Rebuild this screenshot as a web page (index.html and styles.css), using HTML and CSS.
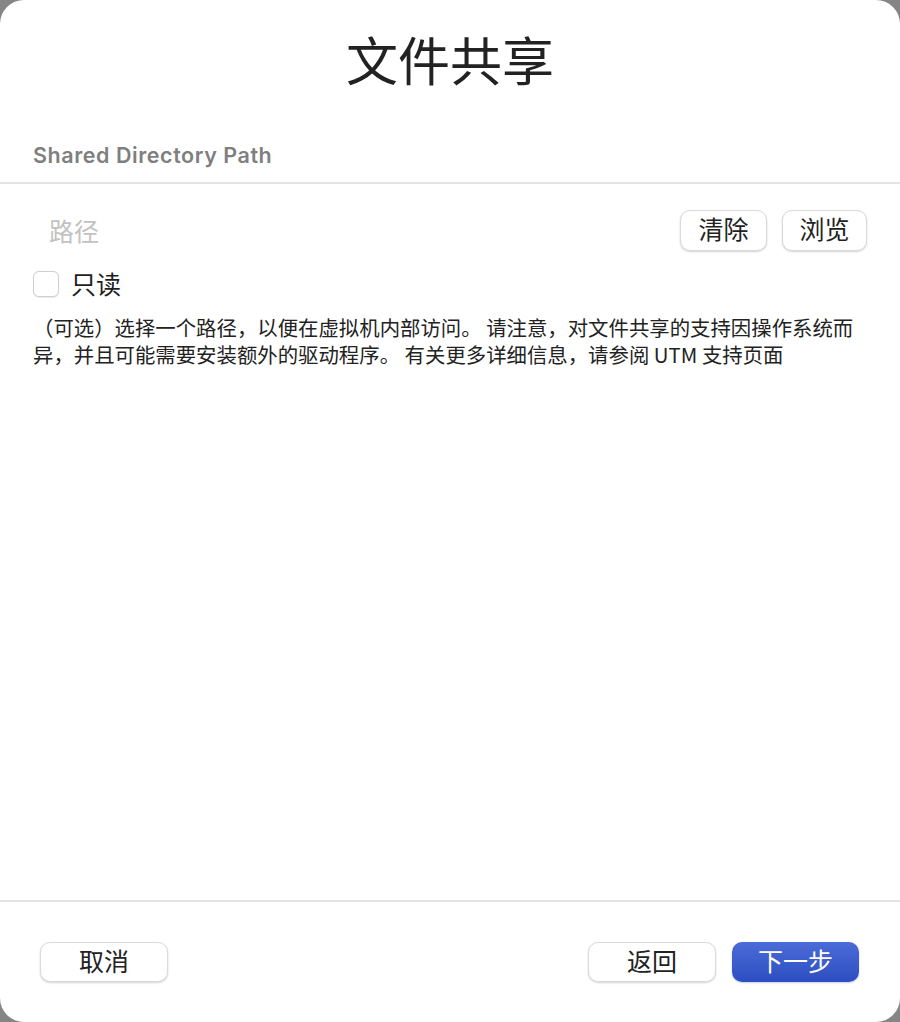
FILE: index.html
```html
<!DOCTYPE html>
<html lang="zh-CN">
<head>
<meta charset="utf-8">
<title>文件共享</title>
<link rel="stylesheet" href="styles.css">
</head>
<body>
<div class="window">
  <div class="content">
    <h1 class="title">文件共享</h1>
    <div class="section-label">Shared Directory Path</div>
    <div class="section">
      <div class="path-row">
        <div class="path-field">路径</div>
        <div class="path-buttons">
          <button class="btn small">清除</button>
          <button class="btn small">浏览</button>
        </div>
      </div>
      <label class="check-row">
        <span class="checkbox"></span>
        <span class="check-label">只读</span>
      </label>
      <p class="desc">（可选）选择一个路径，以便在虚拟机内部访问。 请注意，对文件共享的支持因操作系统而异，并且可能需要安装额外的驱动程序。 有关更多详细信息，请参阅 UTM 支持页面</p>
    </div>
  </div>
  <div class="footer">
    <button class="btn wide">取消</button>
    <div class="footer-right">
      <button class="btn wide">返回</button>
      <button class="btn wide primary">下一步</button>
    </div>
  </div>
</div>
</body>
</html>
```
FILE: styles.css
```css
* { box-sizing: border-box; }
html, body {
  margin: 0;
  padding: 0;
}
body {
  background: #858585;
  font-family: "Noto Sans CJK SC", "Noto Sans", sans-serif;
  color: #222;
}
.window {
  width: 900px;
  height: 1022px;
  background: #fff;
  border-radius: 24px;
  display: flex;
  flex-direction: column;
  overflow: hidden;
}
.content {
  flex: 1;
  display: flex;
  flex-direction: column;
}
.title {
  margin: 0;
  padding-top: 33px;
  font-size: 52px;
  line-height: 52px;
  font-weight: 400;
  text-align: center;
  color: #222;
}
.section-label {
  margin-top: 58px;
  padding: 0 33px 14px;
  font-family: Inter, "Noto Sans", sans-serif;
  font-weight: 600;
  font-size: 21.5px;
  letter-spacing: 0.55px;
  line-height: 25px;
  color: #7f7f7f;
  border-bottom: 2px solid #e4e4e4;
}
.section {
  padding: 26px 33px 0;
}
.path-row {
  display: flex;
  align-items: center;
  justify-content: space-between;
  height: 41px;
}
.path-field {
  padding-left: 16px;
  padding-bottom: 1px;
  font-size: 25px;
  color: #c2c2c2;
}
.path-buttons {
  display: flex;
  gap: 15px;
}
.btn {
  font-family: "Noto Sans CJK SC", sans-serif;
  font-size: 25px;
  line-height: 1;
  color: #222;
  background: #fff;
  border: 1px solid #dadada;
  border-radius: 10px;
  box-shadow: 0 1px 2px rgba(0,0,0,0.18);
  padding: 0 0 4px;
  display: flex;
  align-items: center;
  justify-content: center;
}
.btn.small {
  height: 41px;
  width: 87px;
}
.path-buttons .btn.small + .btn.small {
  width: 85px;
}
.check-row {
  display: flex;
  align-items: center;
  gap: 12px;
  margin-top: 20px;
  height: 26px;
}
.checkbox {
  width: 26px;
  height: 26px;
  border: 1px solid #cfcfcf;
  border-radius: 6px;
  background: #fff;
  box-shadow: 0 0.5px 1px rgba(0,0,0,0.08);
}
.check-label {
  font-size: 25px;
  color: #1e1e1e;
  padding-bottom: 2px;
}
.desc {
  margin: 17px 0 0;
  font-size: 20.4px;
  line-height: 27px;
  color: #222;
}
.footer {
  border-top: 2px solid #e4e4e4;
  height: 122px;
  padding: 40px 41px 40px 40px;
  display: flex;
  justify-content: space-between;
  align-items: center;
}
.footer-right {
  display: flex;
  gap: 16px;
}
.btn.wide {
  width: 128px;
  height: 40px;
}
.btn.primary {
  width: 127px;
  color: #fff;
  border: none;
  background: linear-gradient(#4b6bd8, #2c4ec0);
  box-shadow: 0 1px 2px rgba(30,60,160,0.25);
}
```
